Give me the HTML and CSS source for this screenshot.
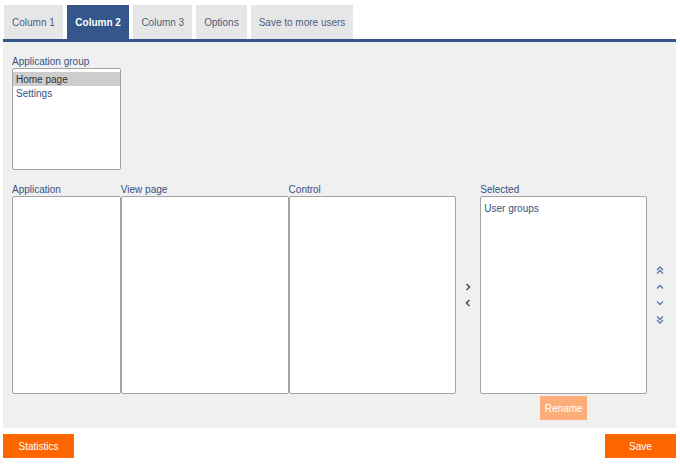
FILE: index.html
```html
<!DOCTYPE html>
<html>
<head>
<meta charset="utf-8">
<link rel="stylesheet" href="styles.css">
</head>
<body>
<div class="page">
  <div class="tabs">
    <div class="tab">Column 1</div>
    <div class="tab active">Column 2</div>
    <div class="tab">Column 3</div>
    <div class="tab">Options</div>
    <div class="tab">Save to more users</div>
  </div>
  <div class="bar"></div>
  <div class="panel">
    <div class="field">
      <div class="label">Application group</div>
      <div class="listbox group">
        <div class="item selected">Home page</div>
        <div class="item">Settings</div>
      </div>
    </div>
    <div class="row">
      <div class="col c-app">
        <div class="label">Application</div>
        <div class="listbox tall"></div>
      </div>
      <div class="col c-view">
        <div class="label">View page</div>
        <div class="listbox tall"></div>
      </div>
      <div class="col c-ctrl">
        <div class="label">Control</div>
        <div class="listbox tall"></div>
      </div>
      <div class="col c-move">
        <div class="label">&nbsp;</div>
        <div class="movebox">
          <svg class="ico" width="8" height="10" viewBox="0 0 8 10"><path d="M2.5 2 L5.5 5 L2.5 8" fill="none" stroke="#555" stroke-width="1.6"/></svg>
          <svg class="ico" width="8" height="10" viewBox="0 0 8 10"><path d="M5.5 2 L2.5 5 L5.5 8" fill="none" stroke="#555" stroke-width="1.6"/></svg>
        </div>
      </div>
      <div class="col c-sel">
        <div class="label">Selected</div>
        <div class="listbox tall">
          <div class="item">User groups</div>
        </div>
        <div class="btnrow"><button class="btn light">Rename</button></div>
      </div>
      <div class="col c-order">
        <div class="label">&nbsp;</div>
        <div class="orderbox">
          <svg class="ico" width="10" height="10" viewBox="0 0 10 10"><path d="M2 5 L5 2 L8 5 M2 8.5 L5 5.5 L8 8.5" fill="none" stroke="#5a78a8" stroke-width="1.3"/></svg>
          <svg class="ico" width="10" height="10" viewBox="0 0 10 10"><path d="M2 6.5 L5 3.5 L8 6.5" fill="none" stroke="#5a78a8" stroke-width="1.3"/></svg>
          <svg class="ico" width="10" height="10" viewBox="0 0 10 10"><path d="M2 3.5 L5 6.5 L8 3.5" fill="none" stroke="#5a78a8" stroke-width="1.3"/></svg>
          <svg class="ico" width="10" height="10" viewBox="0 0 10 10"><path d="M2 1.5 L5 4.5 L8 1.5 M2 5 L5 8 L8 5" fill="none" stroke="#5a78a8" stroke-width="1.3"/></svg>
        </div>
      </div>
    </div>
  </div>
  <div class="footer">
    <button class="btn">Statistics</button>
    <button class="btn">Save</button>
  </div>
</div>
</body>
</html>
```
FILE: styles.css
```css
* { box-sizing: border-box; }
html, body { margin: 0; padding: 0; background: #fff; }
body { font-family: "Liberation Sans", Arial, sans-serif; font-size: 10px; color: #34537f; }
.page { width: 676px; padding: 5px 0 0 3px; }
.tabs { display: flex; gap: 4px; padding-left: 1px; height: 34px; }
.tab { background: #e6e6e6; color: #4d5f80; padding: 0 8px; display: flex; align-items: center; height: 34px; }
.tab.active { background: #34568b; color: #fff; font-weight: bold; padding: 0 8.5px; }
.bar { height: 3px; background: #34568b; }
.panel { background: #f0f0f0; height: 386px; padding: 12px 0 0 9px; }
.label { height: 14px; line-height: 14px; padding-top: 1px; }
.listbox { background: #fff; border: 1px solid #a3a3a3; border-radius: 2px; padding-top: 3px; }
.group { width: 109px; height: 102px; }
.item { height: 14px; line-height: 14px; padding: 1px 0 0 3px; }
.item.selected { background: #cdcdcd; color: #333; }
.row { display: flex; margin-top: 12px; }
.col { display: flex; flex-direction: column; }
.tall { height: 198px; }
.c-app { width: 109px; }
.c-view { width: 168px; }
.c-ctrl { width: 168px; }
.c-move { width: 24px; }
.c-sel { width: 167px; }
.c-sel .tall { padding-top: 4px; }
.c-order { width: 29px; }
.movebox { height: 198px; display: flex; flex-direction: column; align-items: center; justify-content: center; gap: 6px; }
.orderbox { height: 198px; display: flex; flex-direction: column; align-items: center; justify-content: center; gap: 6.5px; padding-right: 3px; }
.ico { display: block; }
.btnrow { display: flex; justify-content: center; padding-top: 2px; }
.btn { font-family: inherit; font-size: 10px; border: 0; background: #ff6600; color: #fff; height: 24px; padding: 0; width: 71px; cursor: pointer; }
.btn.light { background: #ffac7b; width: 47px; }
.footer { display: flex; justify-content: space-between; margin-top: 6px; }
```
